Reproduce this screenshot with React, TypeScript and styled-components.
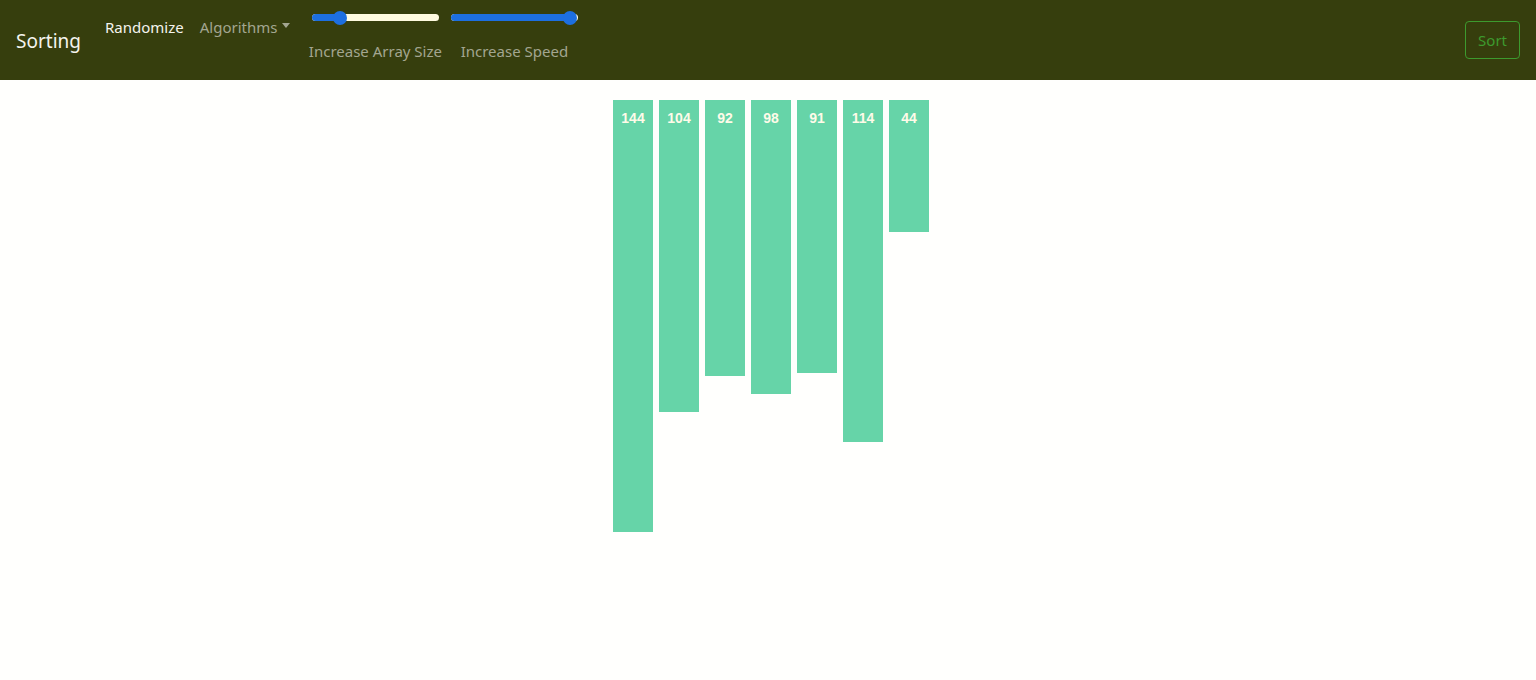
import styled, { createGlobalStyle } from "styled-components";

const GlobalStyle = createGlobalStyle`
  body {
    margin: 0;
    background: #fffffd;
    font-family: "Noto Sans", "DejaVu Sans", sans-serif;
  }
`;

const bars = [144, 104, 92, 98, 91, 114, 44];

type SliderProps = {
  value: number;
  label: string;
};

const Slider = ({ value, label }: SliderProps) => {
  return (
    <Control>
      <Track>
        <Fill style={{ width: `${value}%` }} />
        <Thumb style={{ left: `${value}%` }} />
      </Track>
      <ControlLabel>{label}</ControlLabel>
    </Control>
  );
};

export default function App() {
  return (
    <>
      <GlobalStyle />
      <Navbar>
        <Brand>Sorting</Brand>
        <NavItems>
          <NavLink active>Randomize</NavLink>
          <NavLink>
            Algorithms <Caret />
          </NavLink>
        </NavItems>
        <Controls>
          <Slider value={22} label="Increase Array Size" />
          <Slider value={94} label="Increase Speed" />
        </Controls>
        <SortButton>Sort</SortButton>
      </Navbar>
      <Chart>
        {bars.map((v, i) => (
          <Bar key={i} style={{ height: v * 3 }}>
            {v}
          </Bar>
        ))}
      </Chart>
    </>
  );
}

const Navbar = styled.nav`
  display: flex;
  align-items: center;
  height: 80px;
  padding: 0 16px;
  box-sizing: border-box;
  background: #363e0d;
`;

const Brand = styled.div`
  color: #f4f4ee;
  font-size: 19px;
  margin-right: 24px;
  padding-top: 2px;
`;

const NavItems = styled.div`
  display: flex;
  align-self: flex-start;
  gap: 16px;
  padding-top: 17px;
`;

const NavLink = styled.span<{ active?: boolean }>`
  display: inline-flex;
  align-items: center;
  font-size: 15px;
  color: ${({ active }) => (active ? "#f4f4ee" : "#a3a690")};
  cursor: pointer;
`;

const Caret = styled.span`
  display: inline-block;
  margin-left: 5px;
  width: 0;
  height: 0;
  border-left: 4.5px solid transparent;
  border-right: 4.5px solid transparent;
  border-top: 5px solid #a3a690;
  margin-top: -3px;
`;

const Controls = styled.div`
  display: flex;
  align-self: flex-start;
  gap: 5px;
  margin-left: 18px;
  padding-top: 11px;
`;

const Control = styled.div`
  display: flex;
  flex-direction: column;
  align-items: center;
  width: 134px;
`;

const Track = styled.div`
  position: relative;
  width: 127px;
  height: 7px;
  margin-top: 3px;
  border-radius: 4px;
  background: #fffbe0;
`;

const Fill = styled.div`
  height: 100%;
  border-radius: 4px;
  background: #1d6fe0;
`;

const Thumb = styled.div`
  position: absolute;
  top: 50%;
  width: 14px;
  height: 14px;
  border-radius: 50%;
  background: #1d6fe0;
  transform: translate(-50%, -50%);
`;

const ControlLabel = styled.div`
  margin-top: 20px;
  font-size: 15px;
  color: #a3a690;
  white-space: nowrap;
`;

const SortButton = styled.button`
  margin-left: auto;
  height: 38px;
  padding: 0 12px;
  border: 1px solid #3d9a2e;
  border-radius: 4px;
  background: transparent;
  color: #3d9a2e;
  font-family: "Noto Sans", "DejaVu Sans", sans-serif;
  font-size: 15px;
  cursor: pointer;
`;

const Chart = styled.div`
  display: flex;
  justify-content: center;
  align-items: flex-start;
  gap: 6px;
  padding-top: 20px;
  padding-left: 6px;
`;

const Bar = styled.div`
  width: 40px;
  box-sizing: border-box;
  padding-top: 10px;
  background: #66d4a8;
  color: #fffbe8;
  text-align: center;
  font-family: "Liberation Sans", Arial, sans-serif;
  font-weight: 700;
  font-size: 14px;
`;
